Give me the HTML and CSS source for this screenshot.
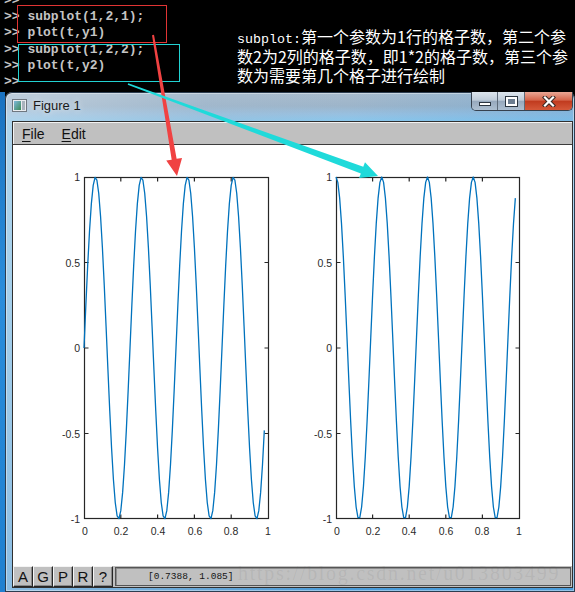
FILE: index.html
```html
<!DOCTYPE html>
<html>
<head>
<meta charset="utf-8">
<link rel="stylesheet" href="styles.css">
</head>
<body>
<div class="screen">
  <div class="console">
    <pre class="cmd">&gt;&gt;
&gt;&gt; subplot(1,2,1);
&gt;&gt; plot(t,y1)
&gt;&gt; subplot(1,2,2);
&gt;&gt; plot(t,y2)
&gt;&gt;</pre>
    <div class="note">
      <div class="nl"><span class="lat">subplot:</span>第一个参数为1行的格子数，第二个参</div>
      <div class="nl">数2为2列的格子数，即1*2的格子数，第三个参</div>
      <div class="nl">数为需要第几个格子进行绘制</div>
    </div>
  </div>
  <div class="desk">
    <div class="strip"></div>
    <div class="window">
      <div class="titlebar">
        <svg class="ticon" width="15" height="13" viewBox="0 0 15 13">
          <defs>
            <linearGradient id="ig" x1="0" y1="0" x2="1" y2="1">
              <stop offset="0" stop-color="#7fb8dc"/>
              <stop offset="1" stop-color="#3c8a56"/>
            </linearGradient>
          </defs>
          <rect x="0.5" y="0.5" width="14" height="12" fill="#e9ecef" stroke="#6f7780"/>
          <rect x="2" y="2" width="7" height="9" fill="url(#ig)"/>
          <rect x="10" y="2" width="3" height="9" fill="#a9b3bd"/>
        </svg>
        <span class="title">Figure 1</span>
        <div class="wbtns">
          <div class="wb min"><i></i></div>
          <div class="wb max"><i></i></div>
          <div class="wb close">
            <svg width="14" height="11" viewBox="0 0 14 11">
              <path d="M3 1.5 L11 9.5 M11 1.5 L3 9.5" stroke="#3a2a26" stroke-width="4.2" stroke-linecap="square"/>
              <path d="M3 1.5 L11 9.5 M11 1.5 L3 9.5" stroke="#fff" stroke-width="2.2" stroke-linecap="square"/>
            </svg>
          </div>
        </div>
      </div>
      <div class="client">
        <div class="menubar">
          <span><u>F</u>ile</span>
          <span><u>E</u>dit</span>
        </div>
        <svg class="plot" width="559" height="421" viewBox="13 145 559 421">
          <g class="axes">
            <rect x="84.5" y="177.5" width="184" height="341"/>
            <path d="M120.8 177.5v4M157.6 177.5v4M194.4 177.5v4M231.2 177.5v4M120.8 518.5v-4M157.6 518.5v-4M194.4 518.5v-4M231.2 518.5v-4M84.5 262.5h4M84.5 348h4M84.5 433.5h4M268.5 262.5h-4M268.5 348h-4M268.5 433.5h-4"/>
            <rect x="336.5" y="177.5" width="183" height="341"/>
            <path d="M372.6 177.5v4M409.2 177.5v4M445.8 177.5v4M482.4 177.5v4M372.6 518.5v-4M409.2 518.5v-4M445.8 518.5v-4M482.4 518.5v-4M336.5 262.5h4M336.5 348h4M336.5 433.5h4M519.5 262.5h-4M519.5 348h-4M519.5 433.5h-4"/>
          </g>
          <g class="ylab">
            <text x="80" y="181">1</text>
            <text x="80" y="266.5">0.5</text>
            <text x="80" y="352">0</text>
            <text x="80" y="437.5">-0.5</text>
            <text x="80" y="523">-1</text>
            <text x="332" y="181">1</text>
            <text x="332" y="266.5">0.5</text>
            <text x="332" y="352">0</text>
            <text x="332" y="437.5">-0.5</text>
            <text x="332" y="523">-1</text>
          </g>
          <g class="xlab">
            <text x="85" y="535">0</text>
            <text x="121" y="535">0.2</text>
            <text x="158" y="535">0.4</text>
            <text x="195" y="535">0.6</text>
            <text x="231" y="535">0.8</text>
            <text x="268" y="535">1</text>
            <text x="337" y="535">0</text>
            <text x="373" y="535">0.2</text>
            <text x="409" y="535">0.4</text>
            <text x="446" y="535">0.6</text>
            <text x="482" y="535">0.8</text>
            <text x="519" y="535">1</text>
          </g>
          <path class="curve" d="M84 348l1.84-42.53 1.84-39.86 1.84-34.66 1.84-27.33 1.84-18.26 1.84-8.02 1.84 2.69 1.84 13.25 1.84 22.96 1.84 31.25 1.84 37.56 1.84 41.52 1.84 42.86 1.84 41.52 1.84 37.56 1.84 31.25 1.84 22.96 1.84 13.25 1.84 2.69 1.84-8.02 1.84-18.26 1.84-27.33 1.84-34.66 1.84-39.86 1.84-42.53
          1.84-42.53 1.84-39.86 1.84-34.66 1.84-27.33 1.84-18.26 1.84-8.02 1.84 2.69 1.84 13.25 1.84 22.96 1.84 31.25 1.84 37.56 1.84 41.52 1.84 42.86 1.84 41.52 1.84 37.56 1.84 31.25 1.84 22.96 1.84 13.25 1.84 2.69 1.84-8.02 1.84-18.26 1.84-27.33 1.84-34.66 1.84-39.86 1.84-42.53
          1.84-42.53 1.84-39.86 1.84-34.66 1.84-27.33 1.84-18.26 1.84-8.02 1.84 2.69 1.84 13.25 1.84 22.96 1.84 31.25 1.84 37.56 1.84 41.52 1.84 42.86 1.84 41.52 1.84 37.56 1.84 31.25 1.84 22.96 1.84 13.25 1.84 2.69 1.84-8.02 1.84-18.26 1.84-27.33 1.84-34.66 1.84-39.86 1.84-42.53
          1.84-42.53 1.84-39.86 1.84-34.66 1.84-27.33 1.84-18.26 1.84-8.02 1.84 2.69 1.84 13.25 1.84 22.96 1.84 31.25 1.84 37.56 1.84 41.52 1.84 42.86 1.84 41.52 1.84 37.56 1.84 31.25 1.84 22.96 1.84 13.25 1.84 2.69 1.84-8.02 1.84-18.26 1.84-27.33 1.84-34.66"/>
          <path class="curve" d="M336 177l1.83 5.37 1.83 15.78 1.83 25.19 1.83 33.04 1.83 38.78 1.83 42.1 1.83 42.79 1.83 40.76 1.83 36.19 1.83 29.34 1.83 20.65 1.83 10.66 1.83 0 1.83-10.66 1.83-20.65 1.83-29.34 1.83-36.19 1.83-40.76 1.83-42.79 1.83-42.1 1.83-38.78 1.83-33.04 1.83-25.19 1.83-15.78 1.83-5.37
          1.83 5.37 1.83 15.78 1.83 25.19 1.83 33.04 1.83 38.78 1.83 42.1 1.83 42.79 1.83 40.76 1.83 36.19 1.83 29.34 1.83 20.65 1.83 10.66 1.83 0 1.83-10.66 1.83-20.65 1.83-29.34 1.83-36.19 1.83-40.76 1.83-42.79 1.83-42.1 1.83-38.78 1.83-33.04 1.83-25.19 1.83-15.78 1.83-5.37
          1.83 5.37 1.83 15.78 1.83 25.19 1.83 33.04 1.83 38.78 1.83 42.1 1.83 42.79 1.83 40.76 1.83 36.19 1.83 29.34 1.83 20.65 1.83 10.66 1.83 0 1.83-10.66 1.83-20.65 1.83-29.34 1.83-36.19 1.83-40.76 1.83-42.79 1.83-42.1 1.83-38.78 1.83-33.04 1.83-25.19 1.83-15.78 1.83-5.37
          1.83 5.37 1.83 15.78 1.83 25.19 1.83 33.04 1.83 38.78 1.83 42.1 1.83 42.79 1.83 40.76 1.83 36.19 1.83 29.34 1.83 20.65 1.83 10.66 1.83 0 1.83-10.66 1.83-20.65 1.83-29.34 1.83-36.19 1.83-40.76 1.83-42.79 1.83-42.1 1.83-38.78 1.83-33.04 1.83-25.19"/>
        </svg>
        <div class="statusbar">
          <span class="sbtn">A</span>
          <span class="sbtn">G</span>
          <span class="sbtn">P</span>
          <span class="sbtn">R</span>
          <span class="sbtn">?</span>
          <div class="sfield">[0.7388, 1.085]</div>
        </div>
      </div>
    </div>
  </div>
  <svg class="annot" width="575" height="592" viewBox="0 0 575 592">
    <rect x="17.5" y="5.5" width="149" height="37" fill="none" stroke="#e03434"/>
    <rect x="18.5" y="44.5" width="161" height="37" fill="none" stroke="#22d2d2"/>
    <polygon points="152.01,35.17 171.69,159.66 166.26,160.58 177,176 182.04,157.9 176.62,158.82 153.99,34.83" fill="#f04242"/>
    <polygon points="127.74,84.7 360.84,173.41 359.12,178.11 378,176 364.99,162.15 363.26,166.85 128.26,83.3" fill="#1fdada"/>
  </svg>
  <div class="watermark">https://blog.csdn.net/u013803499</div>
</div>
</body>
</html>
```
FILE: styles.css
```css
* { box-sizing: border-box; }
html, body { margin: 0; padding: 0; }
body {
  background: #000;
  width: 575px;
  height: 592px;
  overflow: hidden;
}
.screen {
  position: relative;
  width: 575px;
  height: 592px;
  overflow: hidden;
}

/* console */
.console {
  height: 92px;
  display: flex;
  overflow: hidden;
}
.cmd {
  margin: -7px 0 0 0;
  padding-left: 4px;
  width: 237px;
  flex: none;
  font: bold 13px/16.2px "Liberation Mono", monospace;
  color: #c4c4c4;
  white-space: pre;
}
.note {
  padding-top: 27px;
  font: 16px/19.5px "Noto Sans CJK SC", sans-serif;
  color: #fff;
  white-space: nowrap;
}
.nl {
  height: 19.5px;
  line-height: 19.5px;
}
.lat {
  font: 13.33px "Liberation Mono", monospace;
}

/* desktop + window */
.desk {
  display: flex;
  height: 500px;
}
.strip {
  width: 5px;
  flex: none;
  background: linear-gradient(180deg, #1a72c0, #2a8ddb 40%, #1f80d0);
}
.window {
  width: 570px;
  height: 500px;
  flex: none;
  border-radius: 7px 7px 0 0;
  background:
    linear-gradient(90deg, rgba(220,230,238,.45) 0%, rgba(170,190,208,.3) 35%, rgba(110,170,215,0) 60%, rgba(80,160,220,.3) 100%),
    linear-gradient(180deg, #a9bccd 0px, #9db5ca 14px, #98c0e0 22px, #8ac7ec 29px, #7abde8 200px, #4a9bd9 500px);
  box-shadow: inset 0 0 0 1px #2c3d50, inset 0 0 0 2px rgba(255,255,255,.4);
  display: flex;
  flex-direction: column;
}
.titlebar {
  height: 29px;
  flex: none;
  display: flex;
  align-items: flex-start;
}
.ticon {
  margin: 7px 0 0 7px;
  flex: none;
}
.title {
  margin: 6px 0 0 6px;
  font: 13px/15px "Liberation Sans", sans-serif;
  color: #1a1a1a;
  text-shadow: 0 0 6px rgba(255,255,255,.8);
}
.wbtns {
  margin-left: auto;
  margin-right: 2px;
  height: 19px;
  display: flex;
  border: 1px solid #36414f;
  border-top: none;
  border-radius: 0 0 5px 5px;
  overflow: hidden;
}
.wb {
  display: flex;
  align-items: center;
  justify-content: center;
  background: linear-gradient(180deg, #dde5ed 0%, #bfccd9 45%, #97a9bd 52%, #adbfd1 100%);
}
.min { width: 26px; border-right: 1px solid #5d6a79; }
.max { width: 27px; border-right: 1px solid #5d6a79; }
.close {
  width: 47px;
  background: linear-gradient(180deg, #eaa795 0%, #d5654b 45%, #c13b1f 52%, #d5593a 100%);
}
.min i {
  display: block;
  width: 12px;
  height: 4px;
  margin-top: 6px;
  background: #fff;
  border: 1px solid #2b3540;
}
.max i {
  display: block;
  width: 11px;
  height: 9px;
  background: #6c7d90;
  border: 2px solid #fff;
  outline: 1px solid #2b3540;
}

/* client */
.client {
  margin: 0 2px 4px 7px;
  flex: 1;
  border: 1px solid #303030;
  background: #c0c0c0;
  display: flex;
  flex-direction: column;
}
.menubar {
  height: 23px;
  flex: none;
  border-bottom: 1px solid #3c3c3c;
  box-shadow: inset 1px 1px #f2f2f2;
  display: flex;
  align-items: center;
  gap: 17px;
  padding: 1px 0 0 9px;
  font: 14px "Liberation Sans", sans-serif;
  color: #111;
}
.menubar u { text-decoration-thickness: 1px; text-underline-offset: 2px; }
.plot {
  display: block;
  flex: none;
  background: #fff;
}
.axes rect, .axes path {
  fill: none;
  stroke: #262626;
  stroke-width: 1.2;
}
.ylab text, .xlab text {
  font: 10.5px "Liberation Sans", sans-serif;
  fill: #2a2a2a;
}
.ylab text { text-anchor: end; }
.xlab text { text-anchor: middle; }
.curve {
  fill: none;
  stroke: #0072bd;
  stroke-width: 1.3;
  stroke-linejoin: round;
}
.statusbar {
  height: 21px;
  flex: none;
  display: flex;
}
.sbtn {
  width: 20px;
  height: 21px;
  display: flex;
  align-items: center;
  justify-content: center;
  background: #c0c0c0;
  border-top: 1px solid #f4f4f4;
  border-left: 1px solid #f4f4f4;
  border-right: 1px solid #262626;
  border-bottom: 1px solid #262626;
  box-shadow: inset -1px -1px #8a8a8a;
  font: 15px "Liberation Sans", sans-serif;
  color: #111;
}
.sfield {
  flex: 1;
  margin: 1px 1px 1px 2px;
  border: 1px solid #555;
  box-shadow: inset 1px 1px #8c8c8c;
  background: #c0c0c0;
  padding-left: 32px;
  display: flex;
  align-items: center;
  font: 9.5px "Liberation Mono", monospace;
  color: #151515;
}

/* overlays */
.annot {
  position: absolute;
  left: 0;
  top: 0;
  pointer-events: none;
}
.watermark {
  position: absolute;
  left: 238px;
  top: 562px;
  font: 20px/22px "Liberation Serif", serif;
  letter-spacing: 1.7px;
  color: rgba(90, 90, 90, .1);
  white-space: nowrap;
  pointer-events: none;
}
```
